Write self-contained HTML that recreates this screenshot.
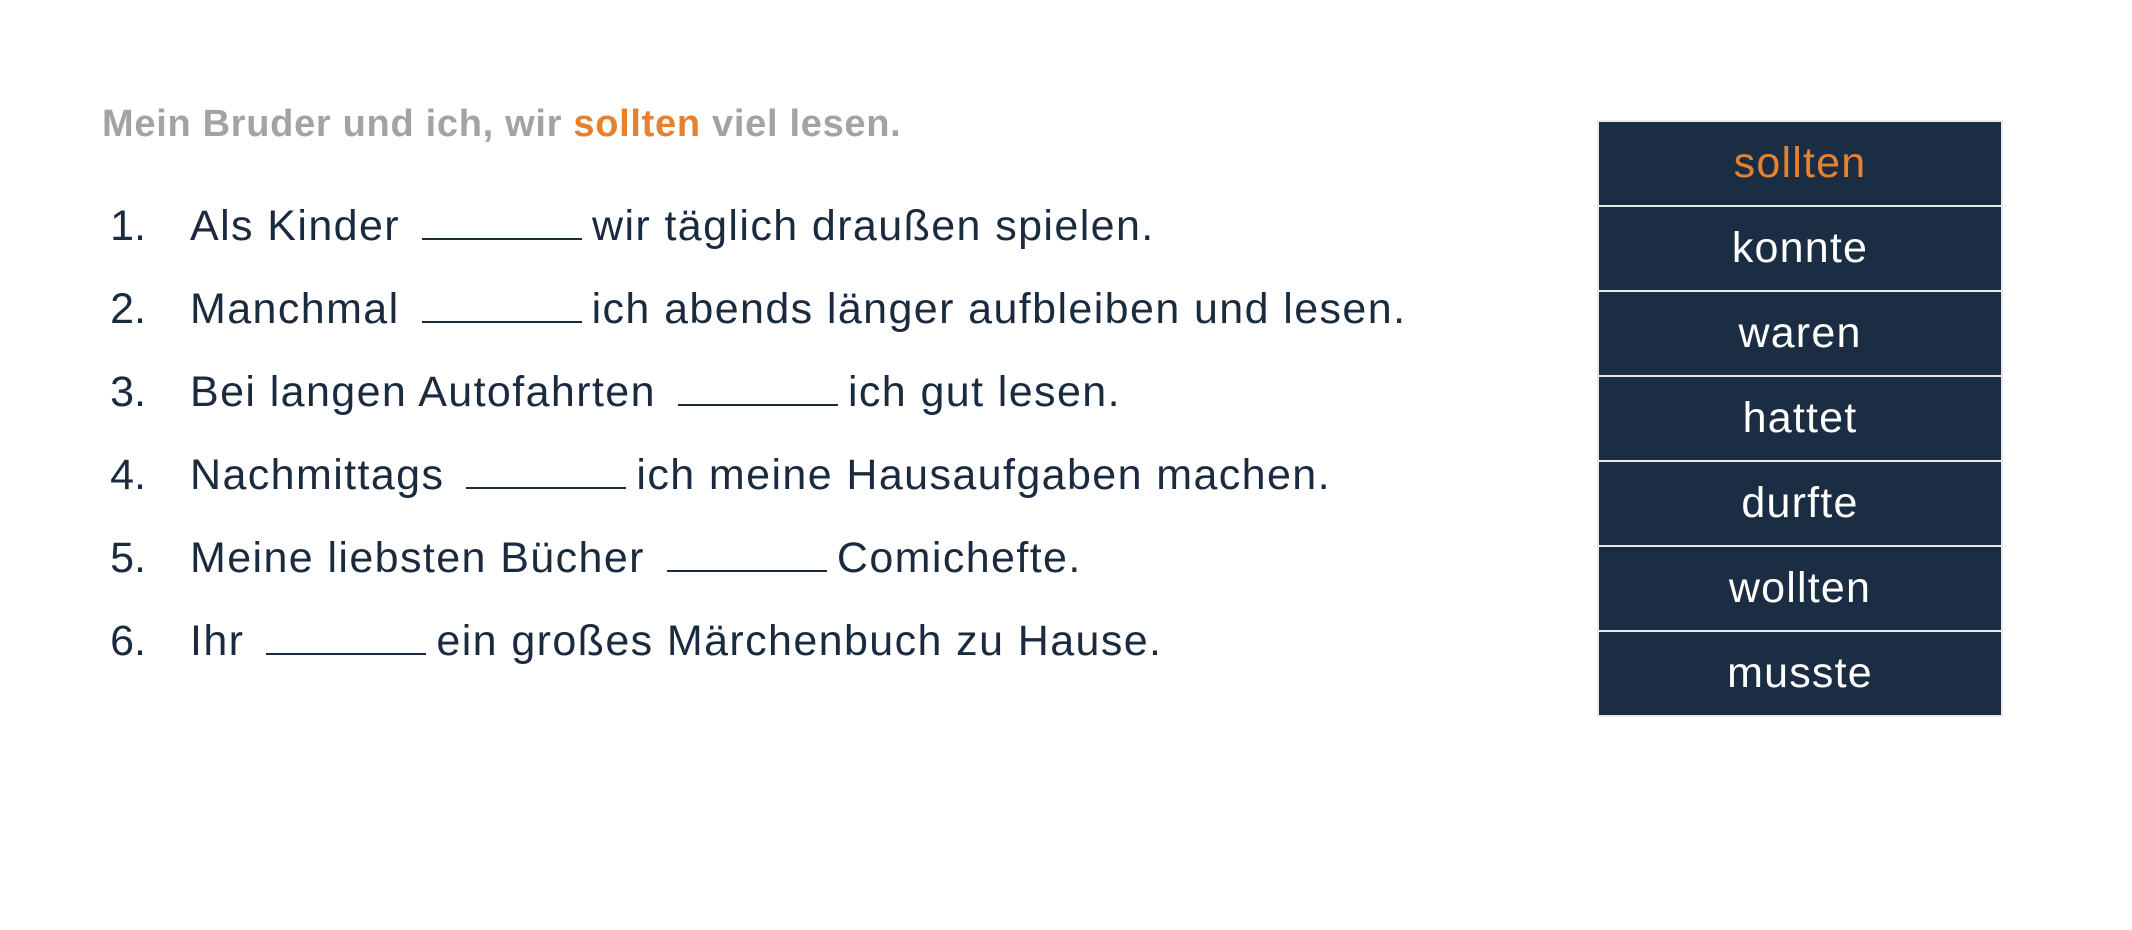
<!DOCTYPE html>
<html><head><meta charset="utf-8"><style>
body{margin:0;width:2132px;height:930px;background:#fff;font-family:"Liberation Sans",sans-serif;position:relative;overflow:hidden}
.h{position:absolute;left:102px;top:103px;font-size:38px;font-weight:bold;color:#a3a3a3;letter-spacing:0.7px;white-space:nowrap}
.o{color:#e8812f}
.row{position:absolute;left:0;font-size:43px;color:#1b2b3f;white-space:nowrap;letter-spacing:1.4px}
.n{position:absolute;width:146px;text-align:right;letter-spacing:0}
.t{position:absolute;left:190px}
.b{display:inline-block;width:160px;border-bottom:2.5px solid #1b2b3f;height:32px;margin:0 10px 0 22px}
.tbl{position:absolute;left:1597px;top:120px;width:406px;height:597px;background:#e6e8ea}
.c{position:absolute;left:2px;width:402px;height:83px;background:#1a2d42;color:#fff;font-size:43px;text-align:center;line-height:83px;letter-spacing:1.2px}
</style></head><body>
<div class="h">Mein Bruder und ich, wir <span class="o">sollten</span> viel lesen.</div>
<div class="row" style="top:202px"><span class="n">1.</span><span class="t">Als Kinder<span class="b"></span>wir täglich draußen spielen.</span></div>
<div class="row" style="top:285px"><span class="n">2.</span><span class="t">Manchmal<span class="b"></span>ich abends länger aufbleiben und lesen.</span></div>
<div class="row" style="top:368px"><span class="n">3.</span><span class="t">Bei langen Autofahrten<span class="b"></span>ich gut lesen.</span></div>
<div class="row" style="top:451px"><span class="n">4.</span><span class="t">Nachmittags<span class="b"></span>ich meine Hausaufgaben machen.</span></div>
<div class="row" style="top:534px"><span class="n">5.</span><span class="t">Meine liebsten Bücher<span class="b"></span>Comichefte.</span></div>
<div class="row" style="top:617px"><span class="n">6.</span><span class="t">Ihr<span class="b"></span>ein großes Märchenbuch zu Hause.</span></div>
<div class="tbl">
<div class="c" style="top:2px;color:#e8812f">sollten</div>
<div class="c" style="top:87px">konnte</div>
<div class="c" style="top:172px">waren</div>
<div class="c" style="top:257px">hattet</div>
<div class="c" style="top:342px">durfte</div>
<div class="c" style="top:427px">wollten</div>
<div class="c" style="top:512px">musste</div>
</div>
</body></html>
